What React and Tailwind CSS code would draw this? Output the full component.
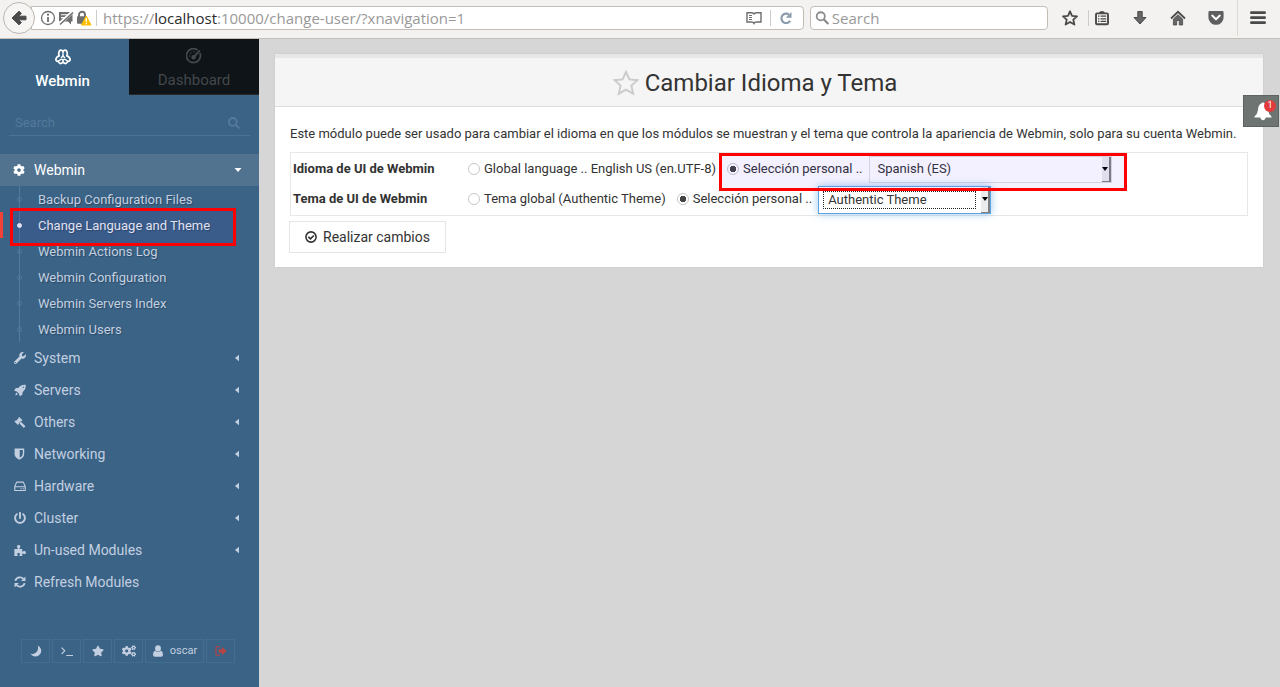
import React from "react";
import { FaCog, FaWrench, FaPowerOff, FaStar, FaCogs, FaSearch } from "react-icons/fa";

function Svg({ children, box = "0 0 16 16", className = "size-4", ...rest }) {
  return (
    <svg viewBox={box} className={className} fill="none" stroke="currentColor" aria-hidden="true" {...rest}>
      {children}
    </svg>
  );
}

const BackArrow = () => (
  <Svg className="size-4" fill="#4a4a4a" stroke="#4a4a4a" strokeLinejoin="round">
    <path d="M1 8 L8 1.2 L10.4 3.4 L7.6 6.2 H15 V9.8 H7.6 L10.4 12.6 L8 14.8 Z" />
  </Svg>
);

const InfoIcon = () => (
  <Svg className="size-4">
    <circle cx="8" cy="8" r="6.5" strokeWidth="1.3" />
    <path d="M8 7 V12" strokeWidth="1.8" />
    <circle cx="8" cy="4.7" r="1.1" fill="currentColor" stroke="none" />
  </Svg>
);

const ChatBlockedIcon = () => (
  <Svg className="size-4">
    <path d="M1 2 H14.5 V11.5 H13 V14.5 L10 11.5 H1 Z" fill="currentColor" stroke="none" />
    <path d="M3 4.8 H11 M3 7.6 H8" stroke="#fff" strokeWidth="1.1" />
    <path d="M1.5 14 L15 1.5" stroke="#fff" strokeWidth="3.6" />
    <path d="M2 14.5 L15 2.5" strokeWidth="1.6" />
  </Svg>
);

const LockWarningIcon = () => (
  <Svg className="size-4">
    <path d="M3 7 V4.8 a3 3 0 0 1 6 0 V7" strokeWidth="1.9" />
    <rect x="1" y="6.3" width="9.6" height="7.4" rx="0.8" fill="currentColor" stroke="none" />
    <path d="M10.3 6 L15 15 H5.4 Z" fill="#ffbf00" stroke="#ffbf00" strokeLinejoin="round" />
    <path d="M10.3 8.2 V11.8 M10.3 12.8 V14.2" stroke="#fff" strokeWidth="1.3" />
  </Svg>
);

const ReaderIcon = () => (
  <Svg box="0 0 16 14" className="h-3.5 w-4">
    <path d="M8 3 Q7 1.8 5.5 1.8 H1 V11 H5.5 Q7.3 11 8 12.4 Q8.7 11 10.5 11 H15 V1.8 H10.5 Q9 1.8 8 3 Z" strokeWidth="1.4" />
    <path d="M3 4.5 H6 M3 6.5 H6 M3 8.5 H6" strokeWidth="1" />
  </Svg>
);

const ReloadIcon = () => (
  <Svg className="size-3.5">
    <path d="M12.8 11.2 A5.4 5.4 0 1 1 11.4 4" strokeWidth="2.4" />
    <path d="M14.3 1 V7.8 H7.8 Z" fill="currentColor" stroke="none" />
  </Svg>
);

const SearchGlass = () => (
  <Svg className="size-4">
    <circle cx="6.2" cy="6.2" r="4.4" strokeWidth="1.9" />
    <path d="M9.5 9.5 L14.4 14.4" strokeWidth="2.4" />
  </Svg>
);

const BookmarkStar = () => (
  <Svg className="size-4">
    <path d="M8 1.3 L10 5.8 L15 6.3 L11.3 9.6 L12.4 14.6 L8 12 L3.6 14.6 L4.7 9.6 L1 6.3 L6 5.8 Z" strokeWidth="1.8" strokeLinejoin="round" />
  </Svg>
);

const ListIcon = () => (
  <Svg className="size-4">
    <path d="M5 3 Q5.5 1 8 1 Q10.5 1 11 3 Z" fill="currentColor" stroke="none" />
    <rect x="2" y="3.4" width="12" height="10.8" rx="1" strokeWidth="1.9" />
    <path d="M4 6.2 H5.4 M6.6 6.2 H12.2 M4 8.8 H5.4 M6.6 8.8 H12.2 M4 11.4 H5.4 M6.6 11.4 H12.2" strokeWidth="1.2" />
  </Svg>
);

const DownloadIcon = () => (
  <Svg className="size-4">
    <path d="M5.8 1.5 H10.2 V7.5 H14 L8 14 L2 7.5 H5.8 Z" fill="#666" strokeWidth="1" strokeLinejoin="round" />
  </Svg>
);

const HomeIcon = () => (
  <Svg className="size-4">
    <path d="M1 8.5 L8 1.8 L15 8.5" strokeWidth="1.8" />
    <path d="M3.4 9 L8 4.8 L12.6 9 V15 H9.3 V10.5 H6.7 V15 H3.4 Z" fill="#666" strokeWidth="0.8" />
  </Svg>
);

const PocketIcon = () => (
  <Svg className="size-4">
    <path d="M1.6 1 H14.4 Q15.6 1 15.6 2.2 V7.4 a7.6 7.4 0 0 1 -15.2 0 V2.2 Q0.4 1 1.6 1 Z" fill="currentColor" fillOpacity="0.88" stroke="none" />
    <path d="M4.2 5.6 L8 9.2 L11.8 5.6" stroke="#fff" strokeWidth="2" strokeLinecap="round" strokeLinejoin="round" />
  </Svg>
);

const MenuIcon = () => (
  <Svg className="size-4">
    <path d="M1.4 2.7 H14.6 M1.4 7.7 H14.6 M1.4 12.7 H14.6" strokeWidth="2.8" strokeLinecap="round" />
  </Svg>
);

const WebminLogo = () => (
  <Svg className="size-4" strokeWidth="1.7" strokeLinejoin="round" strokeLinecap="round">
    <path d="M4.2 6.8 C3.4 4.8 3.6 2.8 4.9 1.4 C6.2 1 7.4 1.5 8 2.6 C8.6 1.5 9.8 1 11.1 1.4 C12.4 2.8 12.6 4.8 11.8 6.8 C13.6 7.2 14.8 8.6 15.2 10.6 C14.9 11.8 13.9 12.5 12.6 12.3 C12.5 13.6 11.8 14.4 10.6 14.6 C9.4 14.5 8.5 13.9 8 12.9 C7.5 13.9 6.6 14.5 5.4 14.6 C4.2 14.4 3.5 13.6 3.4 12.3 C2.1 12.5 1.1 11.8 0.8 10.6 C1.2 8.6 2.4 7.2 4.2 6.8 Z" />
    <path d="M8 2.8 V5.4 C8 7 7.4 8 6.4 8.4 M8 5.4 C8 7 8.6 8 9.6 8.4 M3.6 12 L6 10.4 C7 10 8 10.6 8 12.6 M12.4 12 L10 10.4 C9 10 8 10.6 8 12.6" strokeWidth="1.3" />
  </Svg>
);

const GaugeIcon = () => (
  <Svg className="size-4">
    <path d="M13.9 5 A7 7 0 1 1 11.4 1.9" strokeWidth="1.8" />
    <path d="M8 8.8 L13.8 2.4" strokeWidth="2" />
    <circle cx="7.6" cy="9.2" r="2.2" fill="currentColor" stroke="none" />
    <path d="M3 8 H4.3 M4.4 4.6 L5.3 5.5 M8 3 V4.3" strokeWidth="1.2" />
  </Svg>
);

const RocketIcon = () => (
  <Svg className="size-[13px]">
    <path d="M15.6 0.4 C16 4.8 14.6 7.6 11.4 10.2 L11.2 13.6 L7.6 15.8 L6.8 12.2 L3.8 9.2 L0.2 8.4 L2.4 4.8 L5.8 4.6 C8.4 1.4 11.2 0 15.6 0.4 Z" fill="currentColor" stroke="none" />
    <path d="M3 10.6 L5.4 13 L1.6 14.6 Z" fill="currentColor" stroke="none" />
    <circle cx="12.4" cy="3.6" r="0.9" fill="#3a6386" stroke="none" />
  </Svg>
);

const GavelIcon = () => (
  <Svg className="size-[13px]">
    <path d="M7 0.6 L11.4 5 L10 6.4 L9.4 6 L6.2 9.2 L6.6 9.8 L5.2 11.2 L0.6 6.8 L2 5.4 L2.7 5.8 L5.9 2.6 L5.5 1.9 Z" fill="currentColor" stroke="none" />
    <path d="M8.2 8.2 L14.2 14.2" strokeWidth="3" />
  </Svg>
);

const PuzzleIcon = () => (
  <Svg className="size-[13px]">
    <path d="M0.5 6 H5 C5.4 5 4 4.2 4 2.8 C4 1.4 5 0.8 6.2 0.8 C7.4 0.8 8.4 1.5 8.4 2.8 C8.4 4.2 7 5 7.4 6 H11 V9.2 C12 10 12.6 8.6 14 8.6 C15.3 8.6 15.9 9.6 15.9 10.7 C15.9 11.9 15.2 12.9 13.9 12.9 C12.6 12.9 12 11.7 11 12.2 V15.4 H7.3 C6.8 14.3 8 13.9 8 12.7 C8 11.7 7.2 11.2 6.2 11.2 C5 11.2 4.2 11.8 4.2 12.8 C4.2 13.9 5.3 14.3 5 15.4 H0.5 Z" fill="currentColor" stroke="none" />
  </Svg>
);

const ShieldIcon = () => (
  <Svg className="size-3">
    <path d="M0.8 0.6 H13.6 V8 Q13.6 12.6 7.2 15.6 Q0.8 12.6 0.8 8 Z" fill="currentColor" stroke="none" />
    <path d="M7.6 2.5 H11.7 V8 Q11.7 11 7.6 13.1 Z" fill="#3a6386" stroke="none" />
  </Svg>
);

const DriveIcon = () => (
  <Svg className="size-3" strokeWidth="1.5">
    <path d="M1 9 L3.5 2.8 H12.5 L15 9 V14 H1 Z M1 9 H15" strokeLinejoin="round" />
    <path d="M8.7 11.6 H10.2 M11.7 11.6 H13.2" />
  </Svg>
);

const RefreshIcon = () => (
  <Svg className="size-3" strokeWidth="2.4">
    <path d="M1.8 6.5 A6.3 6.3 0 0 1 12.7 4 M14.2 9.5 A6.3 6.3 0 0 1 3.3 12" />
    <path d="M15.3 0.8 V6.6 H9.5 Z M0.7 15.2 V9.4 H6.5 Z" fill="currentColor" stroke="none" />
  </Svg>
);

const MoonIcon = () => (
  <Svg className="size-3">
    <path d="M10.4 0.8 C16 4 16.4 10.4 12 13.6 C8.4 16.2 3.4 15.6 0.6 11.8 C7 13 12.2 8 10.4 0.8 Z" fill="currentColor" stroke="none" />
  </Svg>
);

const TerminalIcon = () => (
  <Svg className="size-3" strokeWidth="1.5">
    <path d="M0.8 3.5 L5 7.8 L0.8 12 M7 14 H16" />
  </Svg>
);

const UserIcon = () => (
  <Svg className="size-3">
    <path d="M8 0.4 a3.9 4.2 0 0 1 0 8.4 a3.9 4.2 0 0 1 0 -8.4 Z" fill="currentColor" stroke="none" />
    <path d="M4.2 7.6 C1.8 8.2 1.4 11 1.4 13.2 Q1.4 15.6 3.8 15.6 H12.2 Q14.6 15.6 14.6 13.2 C14.6 11 14.2 8.2 11.8 7.6 Q8 11 4.2 7.6 Z" fill="currentColor" stroke="none" />
  </Svg>
);

const LogoutIcon = () => (
  <Svg className="size-3">
    <path d="M6.2 2.2 H3.4 Q1.3 2.2 1.3 4.3 V11.7 Q1.3 13.8 3.4 13.8 H6.2" strokeWidth="1.5" />
    <path d="M5 5.7 H9.3 V2.2 L15.6 8 L9.3 13.8 V10.3 H5 Z" fill="currentColor" stroke="none" />
  </Svg>
);

const TitleStar = () => (
  <Svg box="0 0 26 26" className="size-[26px] text-[#ccc]">
    <path d="M13 2 L16.4 9.4 L24.4 10.2 L18.4 15.6 L20.2 23.7 L13 19.6 L5.8 23.7 L7.6 15.6 L1.6 10.2 L9.6 9.4 Z" strokeWidth="2" />
  </Svg>
);

const CheckCircle = () => (
  <Svg className="size-3">
    <circle cx="8" cy="8" r="6.8" strokeWidth="2.1" />
    <path d="M4.4 7.7 L7.3 10.5 L11.8 6" strokeWidth="2.3" />
  </Svg>
);

const BellIcon = () => (
  <Svg box="0 0 20 20" className="size-5 text-white">
    <path d="M9 2 Q10 0.4 11 2 Q15 3.6 15 9 Q15.5 13 18.5 15.5 V16.5 H1.5 V15.5 Q4.5 13 5 9 Q5 3.6 9 2 Z" fill="currentColor" stroke="none" />
    <path d="M7.2 16 H12.8 Q12 19.3 10 19.3 Q8 19.3 7.2 16 Z" fill="currentColor" stroke="none" />
  </Svg>
);

function Toolbar() {
  return (
    <header className="flex h-[39px] shrink-0 items-center border-b border-[#c6bfb8] bg-[#f3f2f0] pb-0.5 pr-0.5 text-[#4a4a4a]">
      <button aria-label="Back" className="relative ml-[3px] flex size-8 shrink-0 items-center justify-center rounded-full border border-[#bdb6af] bg-[#f6f5f4]">
        <BackArrow />
      </button>
      <div className="-ml-1 flex h-6 min-w-0 flex-1 items-center rounded-r-sm border border-[#c3bcb4] bg-white pl-2 text-[#6e6e6e]">
        <span className="flex gap-0.5">
          <InfoIcon />
          <ChatBlockedIcon />
          <LockWarningIcon />
        </span>
        <span className="ml-1 h-4 w-px shrink-0 bg-[#ccc]" />
        <div className="ml-1.5 min-w-0 flex-1 whitespace-nowrap font-['Open_Sans',sans-serif] text-[15px] leading-5 text-[#999]">
          https://<span className="text-[#2b2b2b]">localhost</span>:10000/change-user/?xnavigation=1
        </div>
        <button aria-label="Reader view"><ReaderIcon /></button>
        <span className="mx-2 h-4 w-px bg-[#ccc]" />
        <button aria-label="Reload" className="mr-2.5 text-[#8a9bab]"><ReloadIcon /></button>
      </div>
      <label className="ml-1.5 flex h-6 w-[238px] shrink-0 items-center rounded-sm border border-[#c3bcb4] bg-white pl-1 text-[#8c8c8c]">
        <SearchGlass />
        <input aria-label="Search the web" placeholder="Search" className="ml-0.5 w-full min-w-0 bg-transparent font-['Open_Sans',sans-serif] text-[15px] leading-5 outline-none placeholder:text-[#999]" />
      </label>
      <nav className="ml-1 flex shrink-0 items-center">
        <button aria-label="Bookmark" className="flex h-8 w-9 items-center justify-center"><BookmarkStar /></button>
        <span className="-mr-1 h-4 w-px bg-[#ccc]" />
        <button aria-label="Bookmarks" className="flex h-8 w-[34px] items-center justify-center"><ListIcon /></button>
        <button aria-label="Downloads" className="flex h-8 w-[42px] items-center justify-center"><DownloadIcon /></button>
        <button aria-label="Home" className="flex h-8 w-[34px] items-center justify-center"><HomeIcon /></button>
        <button aria-label="Pocket" className="flex h-8 w-[42px] items-center justify-center"><PocketIcon /></button>
        <span className="h-9 w-px bg-[#dddad6]" />
        <button aria-label="Menu" className="flex h-8 w-10 items-center justify-center"><MenuIcon /></button>
      </nav>
    </header>
  );
}

const pages = [
  "Backup Configuration Files",
  "Change Language and Theme",
  "Webmin Actions Log",
  "Webmin Configuration",
  "Webmin Servers Index",
  "Webmin Users",
];

const sections = [
  ["System", <FaWrench />],
  ["Servers", <RocketIcon />],
  ["Others", <GavelIcon />],
  ["Networking", <ShieldIcon />],
  ["Hardware", <DriveIcon />],
  ["Cluster", <FaPowerOff />],
  ["Un-used Modules", <PuzzleIcon />],
];

function Sidebar() {
  const tool = "flex h-6 w-[29px] items-center justify-center border border-[#456d8e] text-[12px]";
  return (
    <aside className="flex w-[259px] shrink-0 flex-col bg-[#3a6386] text-[#c3cfe0]">
      <div className="flex text-[15px] leading-5">
        <a href="#webmin" className="flex h-14 flex-1 flex-col items-center gap-1.5 pr-1 pt-2.5 font-medium text-white">
          <WebminLogo />
          Webmin
        </a>
        <a href="#dashboard" className="flex h-14 w-[130px] flex-col items-center gap-1.5 border-b border-[#2a2826] bg-[#0e1418] pt-[9px] text-[#43484b]">
          <GaugeIcon />
          Dashboard
        </a>
      </div>
      <label className="mx-[9px] mt-[15px] flex h-[26px] items-center border-b border-[#4c7395] pl-1.5 pr-2.5 text-[#54799c]">
        <input aria-label="Search modules" placeholder="Search" className="min-w-0 flex-1 bg-transparent text-[13px] outline-none placeholder:text-[#54799c]" />
        <FaSearch className="size-3" />
      </label>

      <nav className="mt-[18px] text-[14px] [text-shadow:1px_1px_1px_rgb(0_0_0/0.25)]">
        <button className="flex h-8 w-full items-center bg-[#51738f] pl-[13px] pr-[17px] text-white">
          <FaCog className="size-3" />
          <span className="ml-[9px] flex-1 text-left">Webmin</span>
          <svg viewBox="0 0 8 4" className="h-1 w-2" fill="currentColor"><path d="M0.5 0 H7.5 L4 4 Z" /></svg>
        </button>
        <div className="relative">
          <ul className="ml-[19px] border-l border-[#54799c]">
            {pages.map((name, i) => (
              <li key={name} className="h-[26px]">
                <a href={"#page-" + i} className={"flex h-full items-center pt-px text-[13px] " + (i === 1 ? "text-white" : "")}>
                  <span className={"-ml-[3px] mr-4 size-[5px] rounded-full border " + (i === 1 ? "border-white bg-white" : "border-[#54799c]")} />
                  {name}
                </a>
              </li>
            ))}
          </ul>
          <span className="absolute left-0 top-[26px] h-[26px] w-[3px] bg-[#f44336]" />
          <span className="pointer-events-none absolute left-[10px] top-[22px] h-[38px] w-[226px] border-3 border-[#ff0000] bg-[#3333aa]/15" />
        </div>
        {sections.map(([name, icon]) => (
          <button key={name} className="flex h-8 w-full items-center pl-[14px] pr-5">
            <span className="flex w-3 justify-center text-[12px]">{icon}</span>
            <span className="ml-2 flex-1 text-left">{name}</span>
            <svg viewBox="0 0 4 8" className="h-2 w-1" fill="currentColor"><path d="M4 0.8 V7.2 L0 4 Z" /></svg>
          </button>
        ))}
        <button className="flex h-8 w-full items-center pl-[14px]">
          <RefreshIcon />
          <span className="ml-2">Refresh Modules</span>
        </button>
      </nav>

      <div className="mt-[41px] flex gap-0.5 pl-[21px]">
        <button aria-label="Night mode" className={tool}><MoonIcon /></button>
        <button aria-label="Terminal" className={tool}><TerminalIcon /></button>
        <button aria-label="Favorites" className={tool}><FaStar /></button>
        <button aria-label="Settings" className={tool}><FaCogs className="size-3.5" /></button>
        <button className="flex h-6 w-[59px] items-center justify-center gap-1.5 border border-[#456d8e] text-[11px]">
          <UserIcon />
          oscar
        </button>
        <button aria-label="Log out" className={tool + " text-[#b54545]"}><LogoutIcon /></button>
      </div>
    </aside>
  );
}

function Radio({ name, checked, children }) {
  return (
    <label className="flex items-center gap-1 whitespace-nowrap">
      <input
        type="radio"
        name={name}
        defaultChecked={checked}
        className="size-3 appearance-none rounded-full border border-[#c8c8c8] bg-white checked:bg-[radial-gradient(circle,#444_0_3px,transparent_3.5px)]"
      />
      {children}
    </label>
  );
}

const Caret = () => (
  <svg viewBox="0 0 6 4" className="h-1 w-1.5" fill="#000" aria-hidden="true"><path d="M0 0 H6 L3 4 Z" /></svg>
);

function Settings() {
  return (
    <main className="min-w-0 flex-1 pl-4 pr-[17px] pt-[15px]">
      <section className="border-t-4 border-[#e7e7e7] bg-white pb-3.5 shadow-[0_0_2px_rgb(0_0_0/0.08)]">
        <h1 className="flex h-[49px] items-center justify-center gap-1.5 border-b border-[#ddd] bg-[#f5f5f5] pr-7 pt-px text-[24px] text-[#333]">
          <TitleStar />
          Cambiar Idioma y Tema
        </h1>
        <div className="px-[15px] pt-[17px] text-[13px] text-[#333]">
          <p className="leading-5">
            Este módulo puede ser usado para cambiar el idioma en que los módulos se muestran y el tema que controla la apariencia de Webmin, solo para su cuenta Webmin.
          </p>
          <div className="relative mt-2 flex flex-col border border-[#e7e7e7] pb-px">
            <div className="flex h-[31px] items-center pl-0.5">
              <span className="w-[175px] font-bold">Idioma de UI de Webmin</span>
              <Radio name="language">Global language .. English US (en.UTF-8)</Radio>
              <div className="ml-[11px] flex items-center">
                <Radio name="language" checked>Selección personal ..</Radio>
                <div className="relative ml-1.5 mt-px flex h-[27px] w-[243px] items-center border border-[#ddd] bg-white">
                  <select aria-label="Idioma" className="size-full appearance-none bg-transparent pl-2 outline-none">
                    <option>Spanish (ES)</option>
                  </select>
                  <span className="pointer-events-none absolute inset-y-0 right-0 flex w-[9px] items-center justify-center border-b border-r-2 border-[#808080] bg-[#ececec]"><Caret /></span>
                </div>
              </div>
            </div>
            <div className="flex h-[30px] items-center pl-0.5">
              <span className="w-[175px] font-bold">Tema de UI de Webmin</span>
              <Radio name="theme">Tema global (Authentic Theme)</Radio>
              <div className="ml-[11px] flex items-center">
                <Radio name="theme" checked>Selección personal ..</Radio>
                <div className="relative ml-1.5 mt-px flex h-7 w-[173px] items-center border border-[#5ba4e0] bg-white py-1 pl-1 pr-3.5 shadow-[0_0_8px_rgb(91_164_224/0.6)]">
                  <select aria-label="Tema" className="size-full appearance-none border border-dotted border-[#222] bg-transparent pl-1 leading-4 outline-none">
                    <option>Authentic Theme</option>
                  </select>
                  <span className="pointer-events-none absolute inset-y-0 right-0 flex w-[9px] items-center justify-center border-b border-r-2 border-[#808080] bg-[#ececec]"><Caret /></span>
                </div>
              </div>
            </div>
            <span className="pointer-events-none absolute left-[428px] top-0 h-[38px] w-[408px] border-3 border-[#ff0000] bg-[#3311ff]/6" />
          </div>
          <button className="-ml-px mt-[5px] flex h-8 items-center gap-1.5 border border-[#e5e5e5] bg-white px-[15px] text-[14px]">
            <CheckCircle />
            Realizar cambios
          </button>
        </div>
      </section>
    </main>
  );
}

export default function App() {
  return (
    <div className="relative flex min-h-screen flex-col bg-[#d6d6d6] font-[Roboto,sans-serif]">
      <Toolbar />
      <div className="flex flex-1">
        <Sidebar />
        <Settings />
      </div>
      <button aria-label="Notifications" className="absolute right-px top-[95px] flex h-8 w-9 items-center justify-center border border-[#5c6361] bg-[#6d7472] pl-1">
        <BellIcon />
        <span className="absolute right-0.5 top-1 flex size-3 items-center justify-center rounded-full bg-[#e03c3c] text-[9px] text-white">1</span>
      </button>
    </div>
  );
}
